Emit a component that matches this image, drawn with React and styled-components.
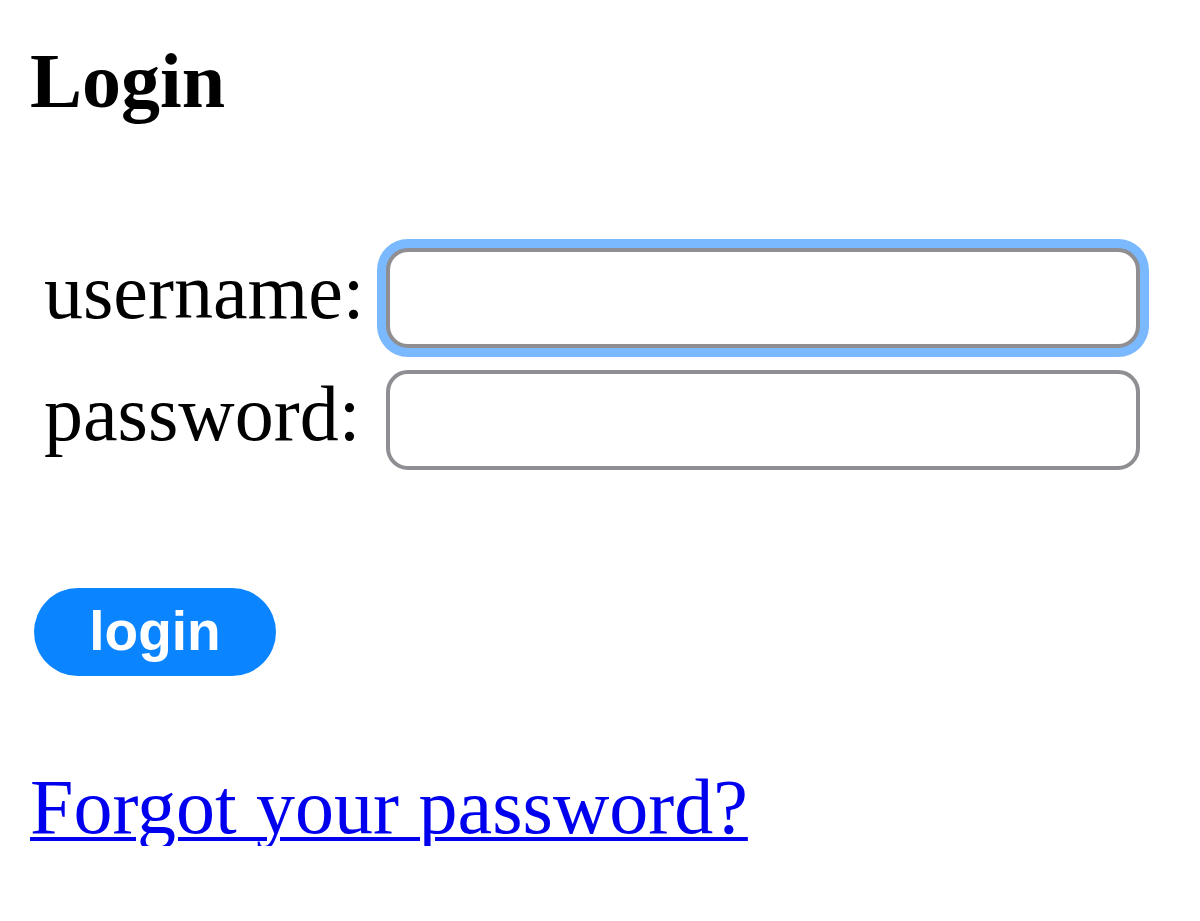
import React from 'react'
import styled, { createGlobalStyle } from 'styled-components'

const Global = createGlobalStyle`
    html, body {
        margin: 0;
        background: #fff;
    }
    body {
        font-family: "Liberation Serif", "Times New Roman", serif;
        color: #000;
    }
`

export default function App() {
    return (<>
        <Global />
        <Page>
            <Title>Login</Title>
            <Form onSubmit={e => e.preventDefault()}>
                <Label htmlFor='username'>username:</Label>
                <Input id='username' focused />
                <Label htmlFor='password'>password:</Label>
                <Input id='password' type='password' />
            </Form>
            <Button type='button'>login</Button>
            <Link href='#'>Forgot your password?</Link>
        </Page>
    </>)
}


const Page = styled.div`
    display: flex;
    flex-direction: column;
    align-items: flex-start;
    padding: 42px 0 0 30px;
    width: 1200px;
    box-sizing: border-box;
`

const Title = styled.h1`
    margin: 0;
    font-size: 78px;
    line-height: 78px;
    font-weight: bold;
`

const Form = styled.form`
    display: grid;
    grid-template-columns: 342px 754px;
    row-gap: 22px;
    align-items: center;
    margin: 128px 0 0 14px;
`

const Label = styled.label`
    font-size: 78px;
    line-height: 78px;
    padding-bottom: 12px;
`

const Input = styled.input`
    box-sizing: border-box;
    height: 100px;
    width: 754px;
    border: 4px solid #8e8e93;
    border-radius: 22px;
    background: #fff;
    outline: none;
    box-shadow: ${p => p.focused ? '0 0 0 9px #7ab8ff' : 'none'};
`

const Button = styled.button`
    margin: 118px 0 0 4px;
    width: 242px;
    height: 88px;
    border: none;
    border-radius: 44px;
    background: #0a84ff;
    color: #fff;
    font-family: "Liberation Sans", Arial, sans-serif;
    font-weight: bold;
    font-size: 55px;
    line-height: 1;
    padding: 0 0 2px;
`

const Link = styled.a`
    margin-top: 92px;
    font-size: 78px;
    line-height: 78px;
    color: #0000ee;
    text-decoration: underline;
    text-decoration-thickness: 4px;
    text-underline-offset: 4px;
`
